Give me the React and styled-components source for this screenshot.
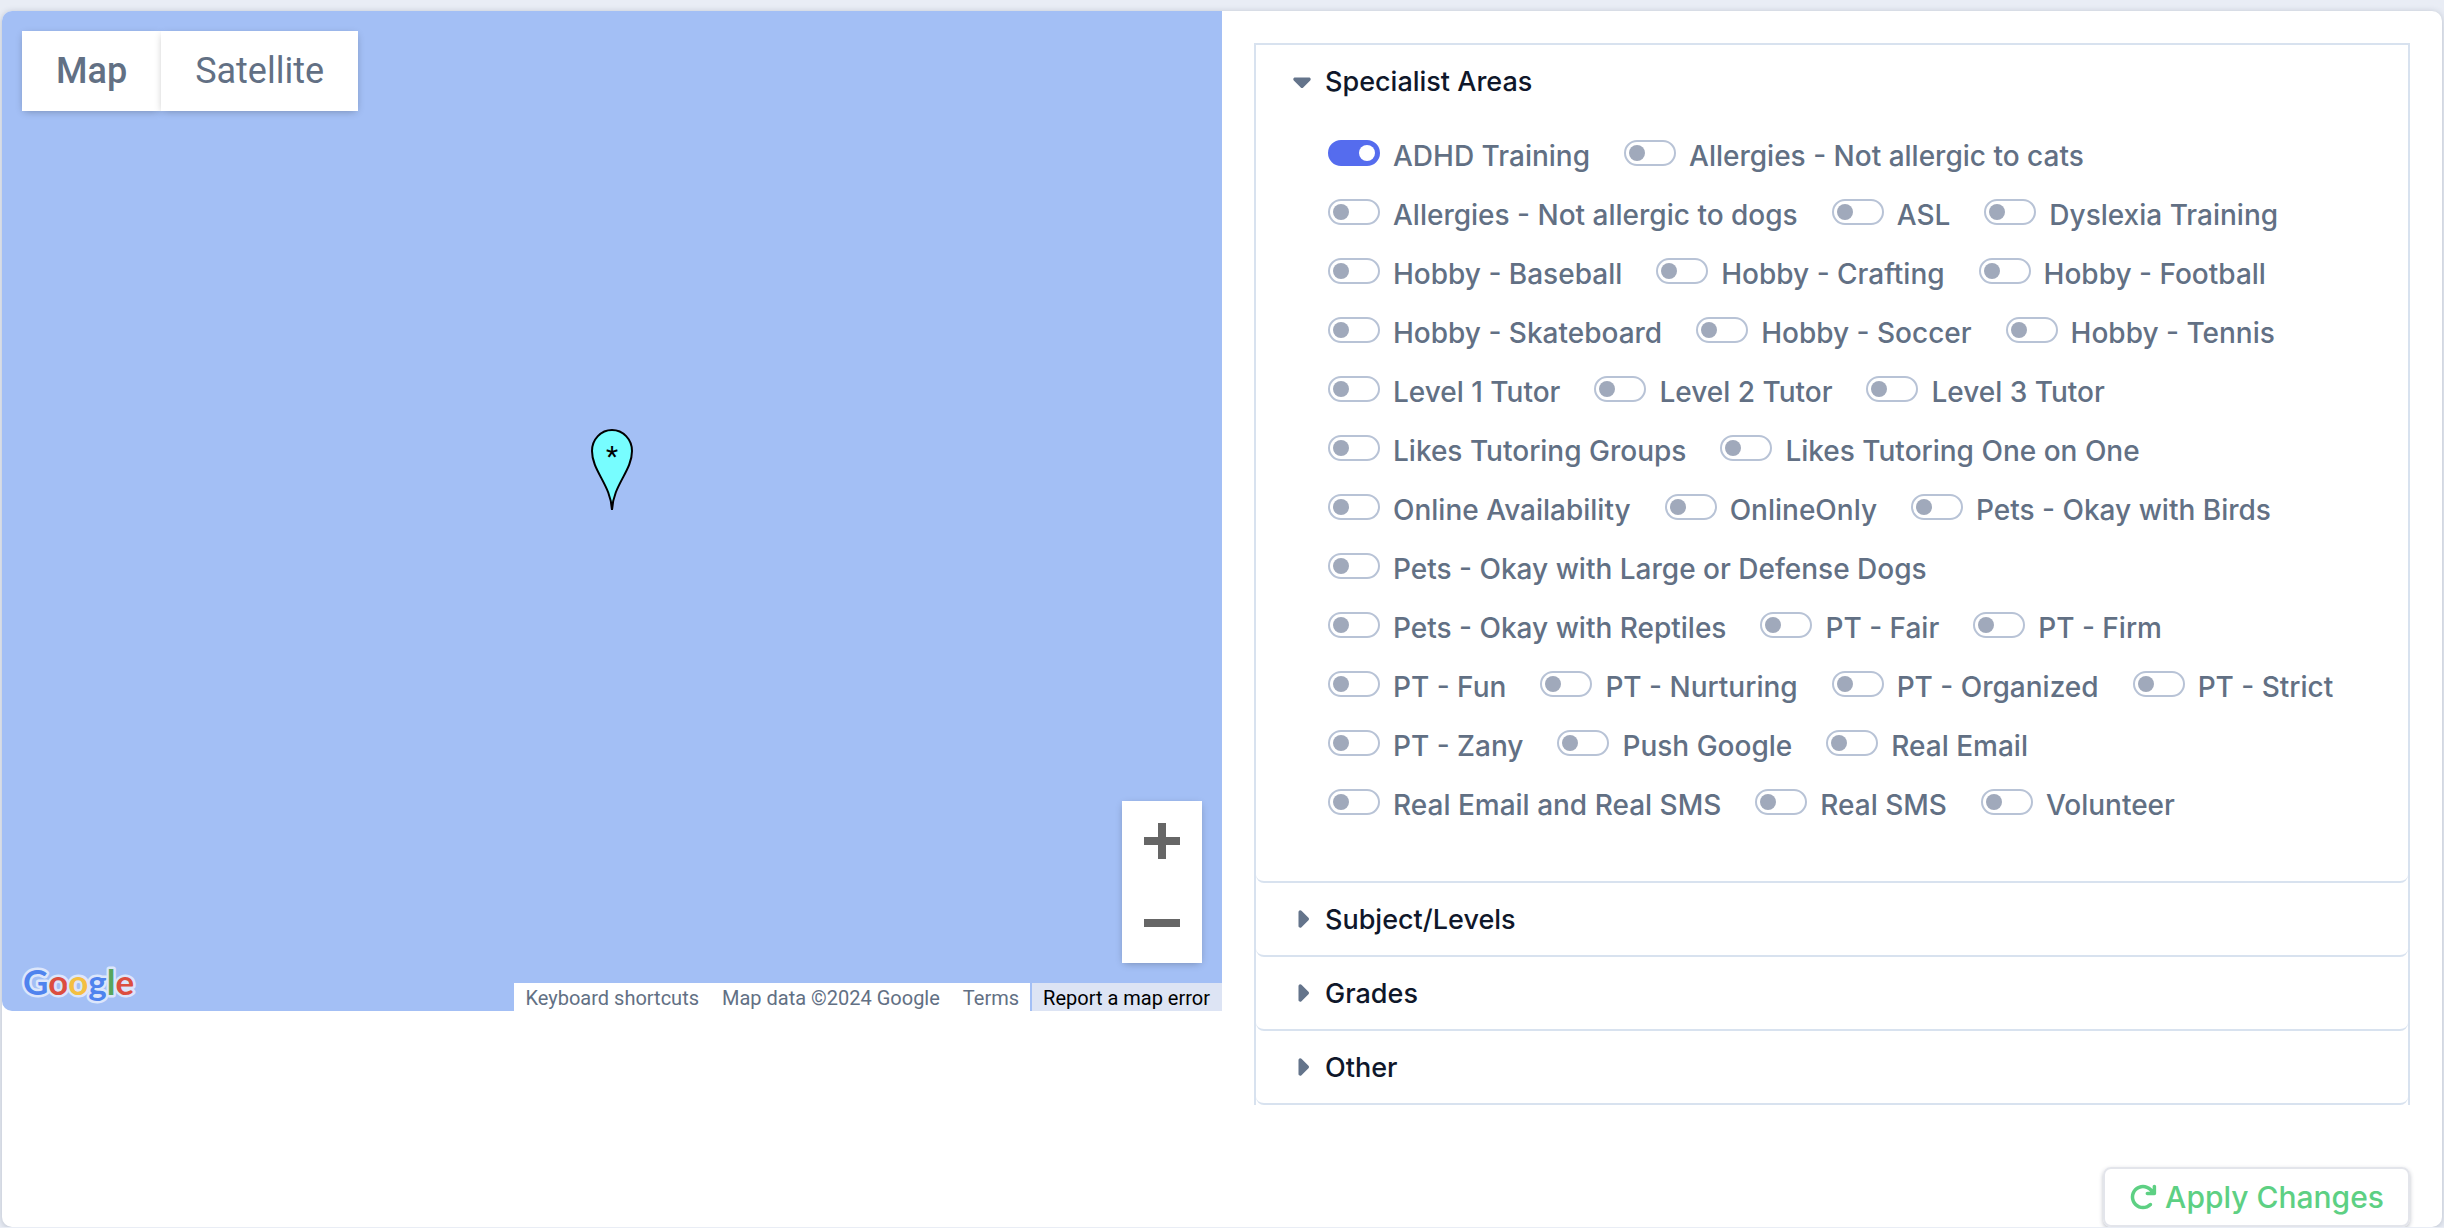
import { useState } from 'react'
import styled, { createGlobalStyle } from 'styled-components';
import { FaArrowRotateRight, FaCaretDown, FaCaretRight } from 'react-icons/fa6';

const areas = [
  'ADHD Training',
  'Allergies - Not allergic to cats',
  'Allergies - Not allergic to dogs',
  'ASL',
  'Dyslexia Training',
  'Hobby - Baseball',
  'Hobby - Crafting',
  'Hobby - Football',
  'Hobby - Skateboard',
  'Hobby - Soccer',
  'Hobby - Tennis',
  'Level 1 Tutor',
  'Level 2 Tutor',
  'Level 3 Tutor',
  'Likes Tutoring Groups',
  'Likes Tutoring One on One',
  'Online Availability',
  'OnlineOnly',
  'Pets - Okay with Birds',
  'Pets - Okay with Large or Defense Dogs',
  'Pets - Okay with Reptiles',
  'PT - Fair',
  'PT - Firm',
  'PT - Fun',
  'PT - Nurturing',
  'PT - Organized',
  'PT - Strict',
  'PT - Zany',
  'Push Google',
  'Real Email',
  'Real Email and Real SMS',
  'Real SMS',
  'Volunteer',
];

function MapPanel() {
  return (
    <MapArea>
      <MapTypes>
        <MapType $active>Map</MapType>
        <MapType>Satellite</MapType>
      </MapTypes>

      <Marker viewBox="0 0 42 82" aria-label="Marker">
        <path
          d="M21 81 C20 56 1 42 1 22 A20 21 0 0 1 41 22 C41 42 22 56 21 81 Z"
          fill="#77fdff"
          stroke="#000"
          strokeWidth="2"
        />
        <text x="21" y="37" textAnchor="middle" fontSize="28" fontFamily="Roboto, sans-serif">*</text>
      </Marker>

      <Zoom>
        <ZoomButton aria-label="Zoom in">
          <svg width="36" height="36" viewBox="0 0 36 36" fill="#666">
            <path d="M14 0h8v14h14v8H22v14h-8V22H0v-8h14z" />
          </svg>
        </ZoomButton>
        <ZoomButton aria-label="Zoom out">
          <svg width="36" height="36" viewBox="0 0 36 36" fill="#666">
            <path d="M0 14h36v8H0z" />
          </svg>
        </ZoomButton>
      </Zoom>

      <Logo viewBox="0 0 120 52" aria-label="Google">
        <text x="3" y="36">
          <tspan fill="#4f83ee">G</tspan>
          <tspan fill="#dc4e3f">o</tspan>
          <tspan fill="#f4bf42">o</tspan>
          <tspan fill="#4f83ee">g</tspan>
          <tspan fill="#58a55c">l</tspan>
          <tspan fill="#dc4e3f">e</tspan>
        </text>
      </Logo>

      <Credits>
        <CreditButton>Keyboard shortcuts</CreditButton>
        <Credit>Map data ©2024 Google</Credit>
        <CreditLink href="#terms">Terms</CreditLink>
        <ReportLink href="#report">Report a map error</ReportLink>
      </Credits>
    </MapArea>
  )
}

function Section({ title, open, onToggle, children }) {
  return (
    <Item>
      <ItemHeader type="button" aria-expanded={open} onClick={onToggle}>
        <Caret>{open ? <FaCaretDown /> : <FaCaretRight />}</Caret>
        {title}
      </ItemHeader>
      {open && children}
    </Item>
  )
}

function App() {

  const [openSection, setOpenSection] = useState('Specialist Areas');
  const [selected, setSelected] = useState(['ADHD Training']);

  const toggleArea = (name) => {
    setSelected(
      selected.includes(name) ? selected.filter((item) => item !== name) : [...selected, name]
    )
  }

  const toggleSection = (name) => {
    setOpenSection(openSection === name ? '' : name);
  }

  return (
    <Page>
      <GlobalStyle />
      <Card>
        <MapPanel />
        <Filters>
          <Accordion>
            <Section
              title="Specialist Areas"
              open={openSection === 'Specialist Areas'}
              onToggle={() => toggleSection('Specialist Areas')}
            >
              <Options>
                {areas.map((name) => (
                  <Option key={name}>
                    <Switch
                      type="checkbox"
                      role="switch"
                      checked={selected.includes(name)}
                      onChange={() => toggleArea(name)}
                    />
                    <OptionText>{name}</OptionText>
                  </Option>
                ))}
              </Options>
            </Section>
            {['Subject/Levels', 'Grades', 'Other'].map((name) => (
              <Section
                key={name}
                title={name}
                open={openSection === name}
                onToggle={() => toggleSection(name)}
              />
            ))}
          </Accordion>
          <ApplyButton type="button">
            <FaArrowRotateRight size={28} />
            Apply Changes
          </ApplyButton>
        </Filters>
      </Card>
    </Page>
  )
}

const GlobalStyle = createGlobalStyle`
  * {
    box-sizing: border-box;
  }
  body {
    margin: 0;
    background: #e9edf5;
    font-family: Inter, sans-serif;
    color: #627084;
  }
  button {
    border: none;
    background: none;
    padding: 0;
    font: inherit;
    color: inherit;
    cursor: pointer;
  }
`;

const Page = styled.main`
  padding: 11px 2px 0;
`;

const Card = styled.div`
  display: grid;
  grid-template-columns: 1fr 1fr;
  align-items: start;
  background: #fff;
  border-radius: 10px;
  box-shadow: 0 1px 6px rgba(40, 50, 75, 0.25);
`;

const MapArea = styled.section`
  position: relative;
  height: 1000px;
  overflow: hidden;
  border-radius: 10px 0 0 10px;
  background: #a3bff5;
  font-family: Roboto, sans-serif;
`;

const MapTypes = styled.div`
  position: absolute;
  top: 20px;
  left: 20px;
  display: flex;
`;

const MapType = styled.button`
  height: 80px;
  padding: 0 34px;
  background: #fff;
  box-shadow: 0 2px 8px -2px rgba(0, 0, 0, 0.3);
  font-size: 36px;
  font-weight: ${(props) => (props.$active ? 500 : 400)};
`;

const Marker = styled.svg`
  position: absolute;
  left: 50%;
  bottom: 50%;
  width: 42px;
  height: 82px;
  transform: translateX(-50%);
`;

const Zoom = styled.div`
  position: absolute;
  right: 20px;
  bottom: 48px;
  display: grid;
  gap: 2px;
  background: #fff;
  box-shadow: 0 2px 8px -2px rgba(0, 0, 0, 0.3);
`;

const ZoomButton = styled.button`
  display: grid;
  place-items: center;
  width: 80px;
  height: 80px;
`;

const Logo = styled.svg`
  position: absolute;
  left: 18px;
  bottom: 0;
  width: 120px;
  height: 52px;
  font-family: Lato, sans-serif;
  font-size: 35px;
  font-weight: 700;
  paint-order: stroke;
  stroke: #dce6fb;
  stroke-width: 5px;
  stroke-linejoin: round;
`;

const Credits = styled.div`
  position: absolute;
  right: 0;
  bottom: 0;
  display: flex;
  font-size: 20px;
  line-height: 26px;
`;

const Credit = styled.span`
  padding: 2px 12px 0;
  background: #fff;
`;

const CreditButton = styled.button`
  padding: 2px 11px 0 12px;
  background: #fff;
`;

const CreditLink = styled.a`
  padding: 2px 11px 0;
  background: #fff;
  color: inherit;
  text-decoration: none;
`;

const ReportLink = styled(CreditLink)`
  margin-left: 2px;
  padding-right: 12px;
  background: #dde4f4;
  color: #000;
`;

const Filters = styled.section`
  display: flex;
  flex-direction: column;
  padding: 32px 32px 0;
`;

const Accordion = styled.div`
  border: 2px solid #d8e2ef;
  border-bottom: none;
`;

const Item = styled.div`
  border-bottom: 2px solid #d8e2ef;
  border-radius: 0 0 8px 8px;
`;

const ItemHeader = styled.button`
  display: flex;
  align-items: center;
  width: 100%;
  height: 72px;
  padding: 0 36px;
  color: #0f172a;
  font-size: 27px;
  font-weight: 500;
`;

const Caret = styled.span`
  display: flex;
  justify-content: center;
  width: 20px;
  margin-right: 13px;
  color: #64748b;
  font-size: 28px;

  svg {
    flex: none;
  }
`;

const Options = styled.div`
  display: flex;
  flex-wrap: wrap;
  column-gap: 34px;
  padding: 7px 64px 49px 72px;
`;

const Option = styled.label`
  display: flex;
  align-items: center;
  gap: 13px;
  height: 59px;
  padding-bottom: 2px;
  cursor: pointer;
`;

const OptionText = styled.span`
  padding-top: 6px;
  font-size: 28px;
  font-weight: 500;
`;

const Switch = styled.input`
  appearance: none;
  display: flex;
  align-items: center;
  width: 52px;
  height: 26px;
  margin: 0;
  padding: 0 3px;
  border: 2px solid #b8c3d6;
  border-radius: 13px;
  cursor: pointer;

  &::before {
    content: '';
    width: 16px;
    height: 16px;
    border-radius: 50%;
    background: #a0a9bb;
  }

  &:checked {
    justify-content: flex-end;
    border-color: #556cee;
    background: #556cee;
  }

  &:checked::before {
    background: #fff;
  }
`;

const ApplyButton = styled.button`
  display: flex;
  align-items: center;
  align-self: flex-end;
  gap: 8px;
  height: 60px;
  margin-top: 62px;
  padding: 0 24px;
  border: 2px solid #e3e5eb;
  border-radius: 8px;
  box-shadow: 0 2px 4px rgba(40, 50, 75, 0.3);
  color: #5dd083;
  font-size: 30px;
  font-weight: 500;
`;

export default App
